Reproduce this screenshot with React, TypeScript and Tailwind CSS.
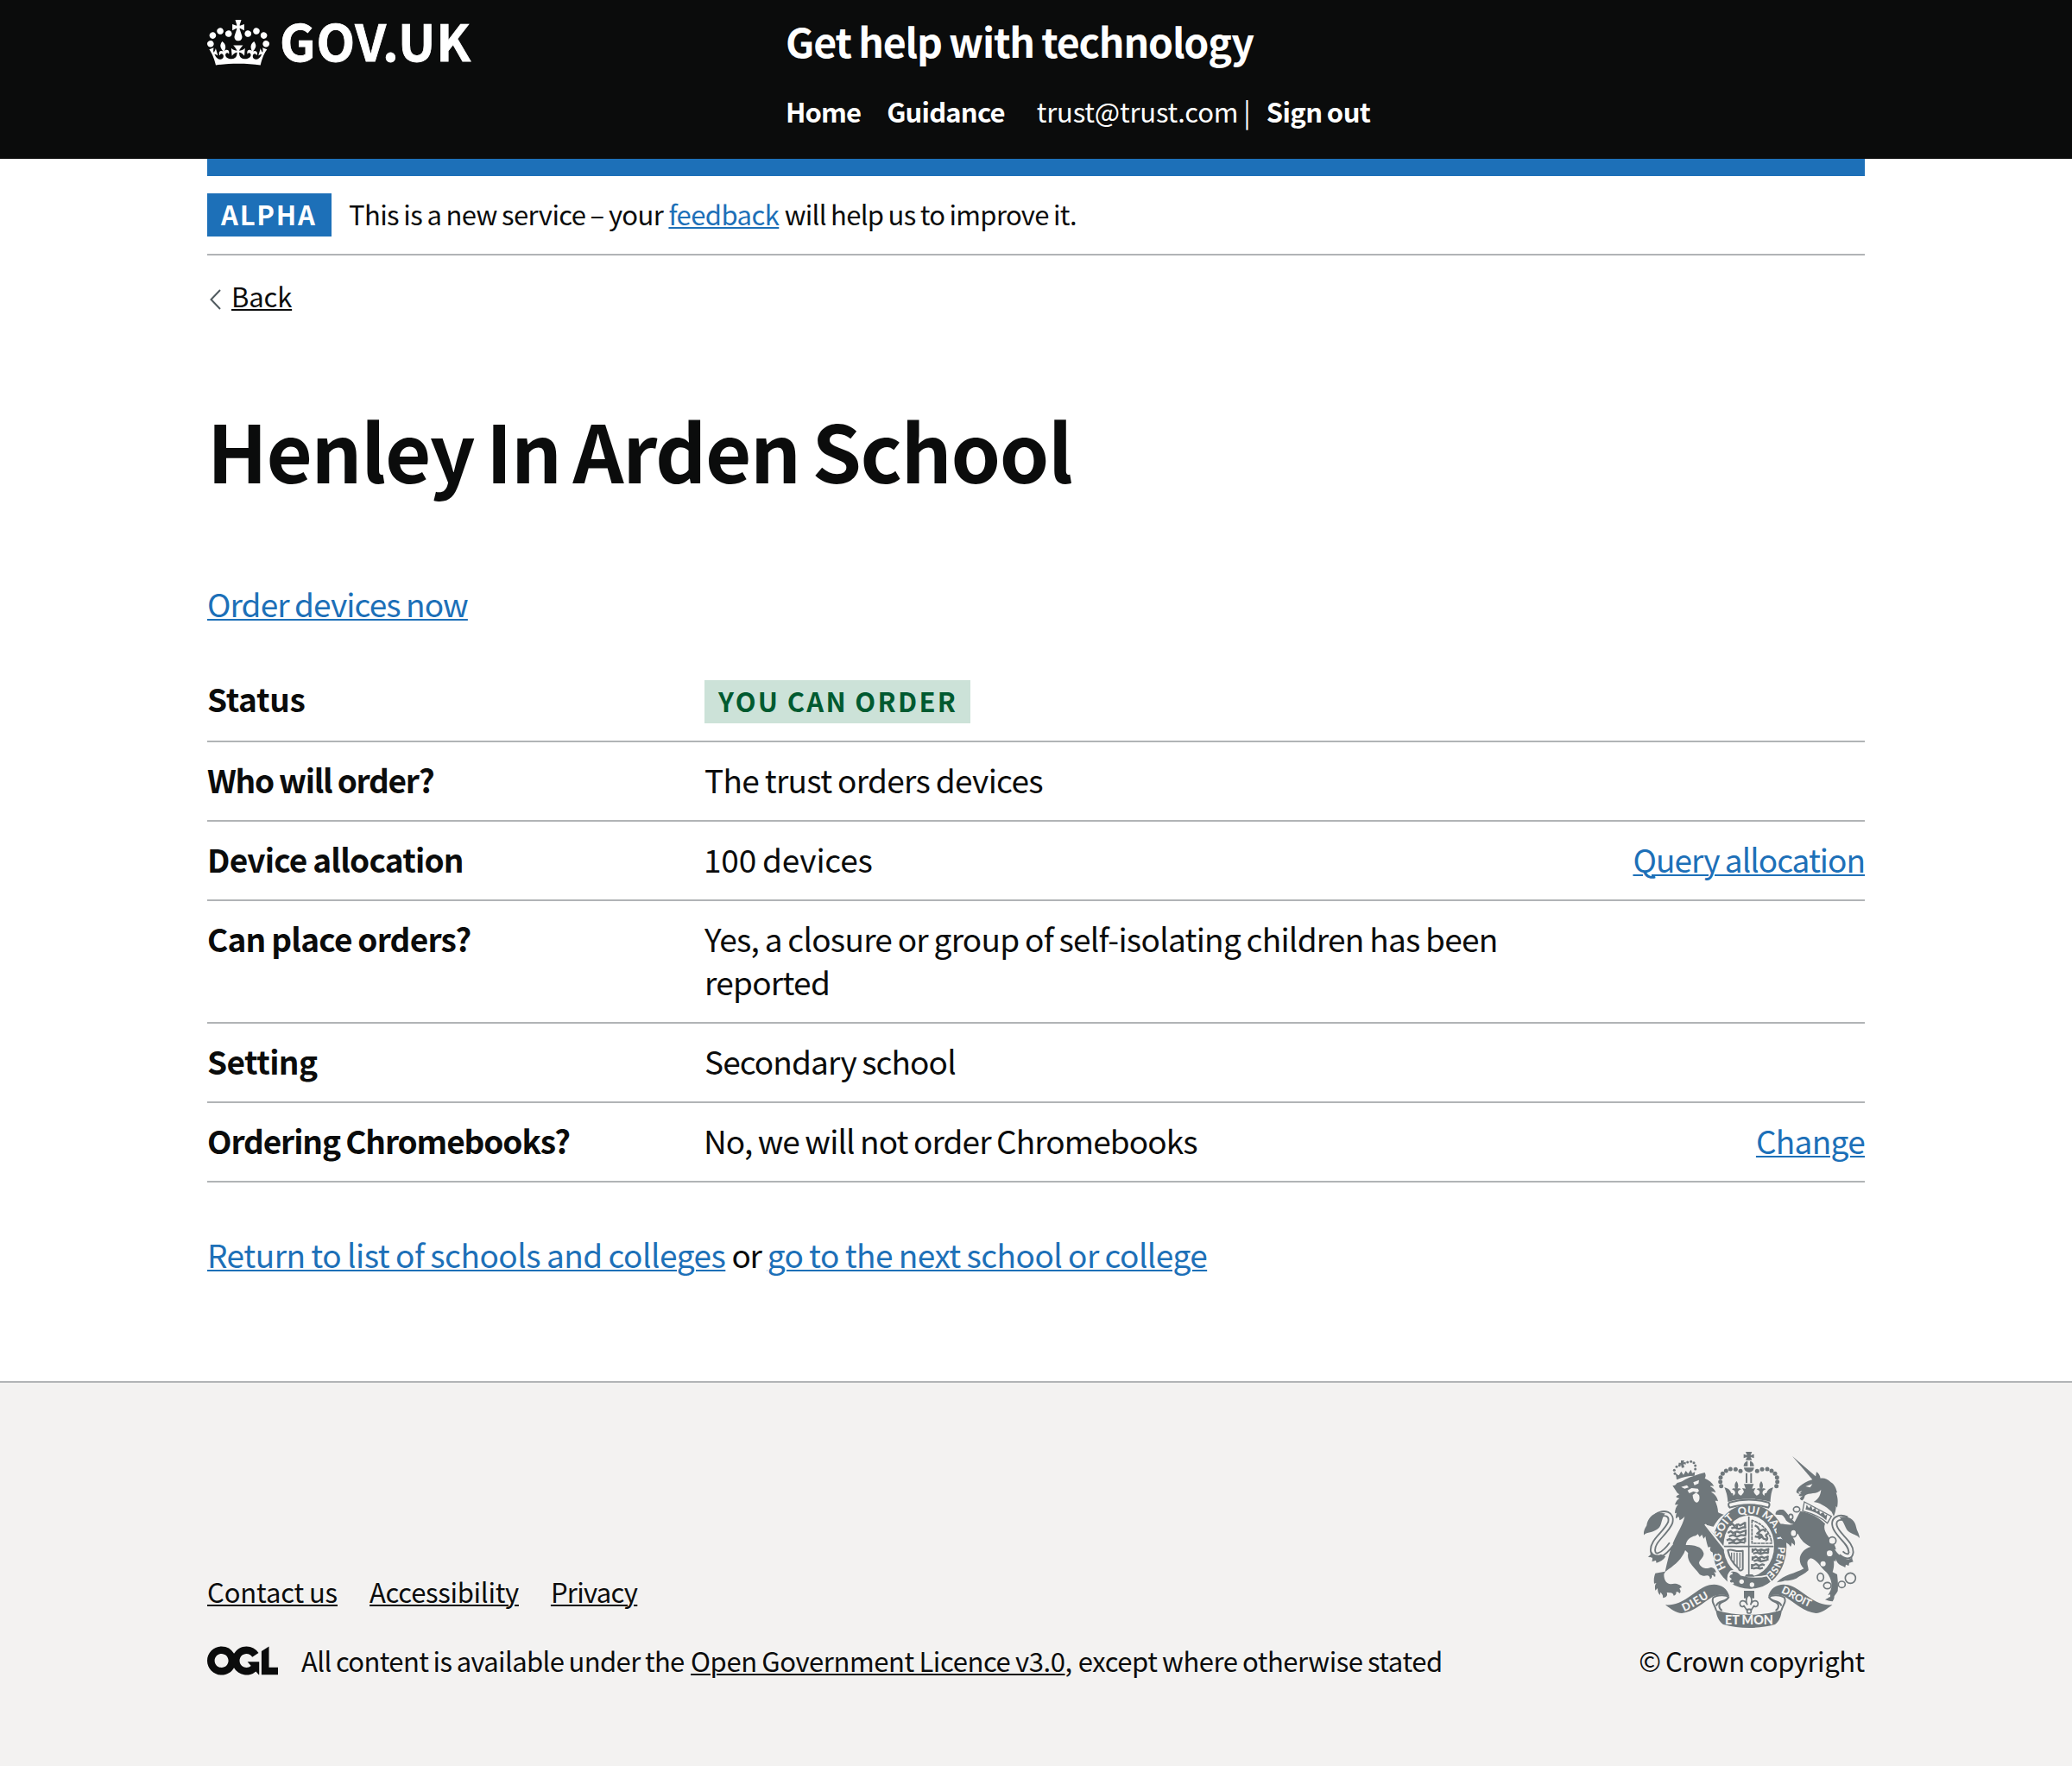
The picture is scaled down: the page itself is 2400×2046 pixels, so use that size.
import React from "react";

const CROWN_BEADS = [[468, 133], [451, 127], [433, 126], [418, 132], [406, 142], [399, 155], [398, 170], [401, 185]];
const LION_CROWN_BEADS = [[238, 130], [246, 118], [256, 113], [240, 142], [284, 102], [296, 100], [306, 104], [311, 114], [311, 126]];

function RoyalArms({ className }: { className: string }) {
  return (
    <svg className={className} viewBox="132 66 750 612" fill="#6f777b" stroke="none" role="img" aria-label="Royal coat of arms">
      {/* imperial crown */}
      <path d="M486 66h22l-5 12 12-4v14l-12-4 5 11h-22l5-11-12 4V74l12 4zM493 98v18h-14c0-10 6-17 14-18zM501 98v18h14c0-10-6-17-14-18zM480 121h35c-1 10-8 16-17 16s-17-6-18-16zM486 140h6v34h-6zM502 140h6v34h-6z" />
      {CROWN_BEADS.map(([x, y]) => (
        <g key={x + "-" + y}>
          <circle cx={x} cy={y} r="7.5" />
          <circle cx={994 - x} cy={y} r="7.5" />
        </g>
      ))}
      <path d="M412 190c12 2 20 8 24 20 4-2 8 2 6 8 8-2 10-12 4-18l-8-4c4-4 8-4 12-2-4-10-2-18 4-26 6 8 8 16 4 26 4-2 8-2 12 2l-8 4c-6 6-2 16 8 18 4-4 8-8 10-14l-6-12 12 2-6-16h34l-6 16 12-2-6 12c2 6 6 10 10 14 10-2 14-12 8-18l-8-4c4-4 8-4 12-2-4-10-2-18 4-26 6 8 8 16 4 26 4-2 8-2 12 2l-8 4c-6 6-4 16 4 18-2-6 2-10 6-8 4-12 12-18 24-20-6 14-9 28-10 50-46-14-104-14-148 0-1-22-6-36-12-50z" />
      <path d="M430 242c42-12 92-12 135 0 6 4 4 12 0 18-40-14-94-14-134 0-6-6-6-14-1-18z" fill="none" stroke="#6f777b" strokeWidth="6" />

      {/* garter and shield */}
      <ellipse cx="499" cy="397" rx="129" ry="148" />
      <ellipse cx="497" cy="393" rx="88" ry="106" fill="#f3f2f1" />
      <path d="M411 395h172M497 291v206" stroke="#6f777b" strokeWidth="5" />
      <g fill="none" stroke="#6f777b" strokeWidth="7" strokeLinejoin="round">
        <path d="M430 322l10-6 6 8 14-6 8 4 16-10M436 332l12-3 14 5 16-6 10 2M424 348l10-6 8 6 14-5 10 4 20-8M428 360l14-5 14 6 14-6 18 2M420 374l10-5 12 6 14-6 10 5 20-7M426 384l14-3 14 3 16-4 14 2M484 310v18M486 336v18M484 364v16M456 316v20M450 344v16M446 370v14" />
        <path d="M510 410l10-6 8 6 12-5 10 4 18-6M512 420l14-4 12 5 14-5 14 2M510 436l12-6 8 6 12-5 8 4 16-6M514 446l12-4 12 5 22-5M510 462l12-6 10 6 12-5 8 3M512 472l12-3 12 3 10-3M510 402v14M510 430v14M508 456v18M538 406v14M536 432v14M532 458v14M564 404v14M562 430v14" />
        <path d="M508 304v80h68c-2-34-26-66-68-80z" strokeWidth="5" strokeDasharray="12 2" />
        <path d="M518 322l10 6 8 14-10 8 14 4 8 14 14 4M536 340l12-4 8 8M540 354l-14 8-8-2M530 368l12-6M554 374c10-2 8-10 4-14s2-10 8-8" />
        <path d="M424 408c18-6 24 8 52 2v64c-6 8-14 4-14-2-14-12-32-32-38-64z" strokeWidth="6" />
        <path d="M437 416v22M446 416v36M456 416v48M466 416v54" strokeWidth="4" />
      </g>
      <path id="garter" d="M497 513A100 116 0 0 1 397 397A100 116 0 0 1 497 281A100 116 0 0 1 599 397A100 116 0 0 1 497 513" fill="none" />
      <g fill="#f3f2f1" fontFamily="Lato, sans-serif" fontWeight="900" fontSize="37" textAnchor="middle">
        <text><textPath href="#garter" startOffset="18%">HO</textPath></text>
        <text><textPath href="#garter" startOffset="35.5%">SOIT</textPath></text>
        <text><textPath href="#garter" startOffset="49.5%">QUI</textPath></text>
        <text><textPath href="#garter" startOffset="62%">MAL</textPath></text>
        <text><textPath href="#garter" startOffset="70.5%">Y</textPath></text>
        <text fontSize="34"><textPath href="#garter" startOffset="82.5%">PENSE</textPath></text>
      </g>
      <path d="M436 480c14-2 26 4 34 14 34 10 70 8 90 2l16 22c-40 34-100 34-142 8-14-8-12-34 2-46z" stroke="#f3f2f1" strokeWidth="5" />
      <path d="M440 488c-14 2-18 14-8 20-10 8 0 20 12 14" fill="none" stroke="#f3f2f1" strokeWidth="7" />
      <path d="M488 492h22l8 8-36 0z" />
      <g fill="#f3f2f1">
        <circle cx="472" cy="517" r="8" />
        <circle cx="508" cy="528" r="8" />
      </g>
      <path d="M480 549h36v26h-10l-8-14-9 14h-9z" />
      <path d="M498 562c14 14 10 26 5 36 6-18 26-18 26-4 0 10-12 14-14 6-2 8-8 10-8 14h-19c0-4-6-6-8-14-2 8-14 4-14-6 0-14 20-14 26 4-5-10-9-22 6-36z" fill="#f3f2f1" stroke="#6f777b" strokeWidth="5" />
      <circle cx="498" cy="620" r="7" fill="#f3f2f1" stroke="#6f777b" strokeWidth="5" />

      {/* motto ribbon */}
      <path d="M382 616c70 22 160 22 230 0-4 24-8 38-24 50-58 16-122 16-180 0-16-12-22-26-26-50z" />
      <g id="ribbonEnd">
        <path d="M207 598c60 4 96-44 138-64 36-16 76-4 85 36-12-10-34-10-56-2-36 22-70 56-110 59-20 0-40-16-57-29z" />
        <path d="M428 570c-12 22-34 14-34 32 0 8 4 12 10 16M374 570c-8 20 2 22 10 48M374 572c10-8 46-12 52 0-8 18-38 8-42 30" fill="none" stroke="#6f777b" strokeWidth="6" />
      </g>
      <use href="#ribbonEnd" transform="matrix(-1 0 0 1 994 0)" />
      <path id="dieu" d="M272 621C306 608 340 582 388 558" fill="none" />
      <path id="droit" d="M608 555C650 572 690 610 750 617" fill="none" />
      <g fill="#f3f2f1" fontFamily="Lato, sans-serif" fontWeight="900">
        <text fontSize="38" letterSpacing="3"><textPath href="#dieu">DIEU</textPath></text>
        <text fontSize="36" letterSpacing="0"><textPath href="#droit">DROIT</textPath></text>
        <text x="498" y="667" fontSize="43" textAnchor="middle">ET MON</text>
      </g>

      {/* lion */}
      <path d="M232 184c8 0 12-4 16-10 12-2 20-6 28-12 20-10 46-18 68-24 4 8 4 14 0 20 14 6 26 14 32 28-6-2-10-2-14 0 10 4 18 12 20 22-6-4-10-4-16-2 12 6 22 18 24 32-4-2-6-2-10-2 6 14 10 26 10 40 6 4 12 6 20 8-14 8-26 24-36 42-10-2-20-4-28-8l56 64c6 12 8 20 8 28-2 10-8 14-14 14l-4-10-4 8-8-2-2-12-6 8c-6-2-8-4-10-10l2-10-8 2c-6-14-8-30-10-38l-6 8-6-14-8 8-6-10-8 6c-20 4-32 16-34 32 28 0 56 4 62 28 2 16-14 22-16 34 4 16 26 24 40 16 12 0 18 8 20 18-4-2-6-2-8 0 6 4 6 12 2 16-2-6-6-8-10-8 2 8 0 12-6 14 0-8-4-12-10-12-8 2-18 2-26-4-10-14-24-26-34-42-6-12-8-20-6-32l-10-10c-10 28-34 50-58 66-8 6-14 10-16 18 0 20 8 32 24 34 16-4 34 0 38 12-6 0-6 2-8 4 6 6 4 14 0 16-4-6-8-6-12-4 2 6-2 10-8 12-2-8-6-10-12-10-4 0-8-2-12 0 4 10-2 16-14 18 2-8-2-14-8-20l-2 10c-6-6-8-14-8-24l-8 8c-2-10-2-20 4-26l-8 2c-2-16 0-24 4-36l34-6c10-40 14-66 28-100 14-34 34-62 40-92-6 8-10 10-18 14 0-8-2-10-4-14-4 6-6 6-8 8-2-8 0-14 2-20l-6 2c0-12 4-24 12-32-6 2-10 2-12 2 4-12 8-18 16-22-6-2-10-2-12-6 4-4 8-6 12-8-8-4-10-8-12-12z" />
      <path d="M345 318l68 86" stroke="#f3f2f1" strokeWidth="6" />
      <path d="M262 188l20-6 6 8-14 4zM304 172l20-8-2 12-14 6zM284 200l14-8 22 2 4 8-6 6-14-4-14 6zM302 216l12-8 10 8c4 12 0 26-8 26s-14-14-14-26z" fill="#f3f2f1" />
      <path d="M246 160c20-10 40-14 62-14" stroke="#6f777b" strokeWidth="6" fill="none" />
      <path d="M246 158l-4-16 12 6 8-14 8 12 8-14 8 10 10-14 4 12 10-4-2 12c-22 0-44 4-62 10z" />
      {LION_CROWN_BEADS.map(([x, y]) => (
        <circle key={x + "." + y} cx={x} cy={y} r="4.5" />
      ))}
      <path d="M261 96l12 0-3 7 8-2 0 9-8-2 3 12-9 2-3-12-7 3-1-9 8 0z" />
      <g fill="none">
        <path id="lionTail" d="M176 290c28-18 56-8 48 22-14 36-66 64-60 100 4 26 34 16 64-26" stroke="#6f777b" strokeWidth="21" />
        <path d="M176 290c28-18 56-8 48 22-14 36-66 64-60 100 4 26 34 16 66-28" stroke="#f3f2f1" strokeWidth="10" />
      </g>
      <path d="M206 280c-6 0-12-2-16-2-28-2-46 22-48 44-4 8-10 14-12 36 8-10 14-10 24-12 16-4 34-12 38-30 4-14 6-24 14-36zM158 410c0 12-4 16-12 20 8 4 10 4 16 4 0 6 0 8-2 14 8-2 10-4 14-4 2 4 0 6 2 8 14-4 24-10 32-22l-16-8c-14 6-28 2-34-12z" />

      {/* unicorn */}
      <path d="M648 81l86 74-12 12z" />
      <path d="M662 206c2-20 34-38 64-46 4-6 4-14 6-24 8 4 12 12 14 22 12-2 26 2 36 14 14 8 18 22 22 36l-4 0c6 16 8 30 4 52l-4-6c0 14-4 26-8 36-4-8-6-14-8-16-20-20-44-32-62-34 12-6 24-18 26-42-14 18-42 8-56 20-2 8-4 12-8 16-4 2-8-2-10-6l10-10c-8 4-12 2-14-2l10-6c-8 2-14 2-18-4z" />
      <path d="M694 186l24-8-8 12zM668 206l14-4-8 8z" fill="#f3f2f1" />
      <path d="M690 240l94 50-14 24c-26-24-54-34-86-42z" fill="#f3f2f1" stroke="#6f777b" strokeWidth="4" />
      <path d="M694 266l4-16 8 12 8-10 4 16 10-8 4 14 10-6 2 14 12-6 6 12 8-6-4 22c-22-22-44-32-72-38z" />
      <path d="M676 272c34 6 62 20 86 44-8 18 4 38 20 56 10 10 16 22 18 34-6-2-8-2-8-2 8 16 10 30 6 44l-6-4c2 16 0 28-4 40l16 8c2 20 4 36 2 58-4 8-8 12-12 18 0 8-2 12-6 18-10 0-20-4-26-6 8-4 12-8 18-10l0-8-8 2c10-14 14-26 12-42-2-14-8-26-16-36-26-22-34-46-56-50-22 10-6 30-8 42-12 12-28 18-42 28-14 6-26 8-40 8-8 4-18 4-28 6 12-14 28-22 44-28 20-6 34-12 50-20-26-28-14-64 24-76-22-10-34-24-44-44-10-6-18-6-28-6l10 18c6 10 10 16 6 28-4-6-8-8-10-10 0 8-2 12-4 14-6-12-16-14-22-18-8-10-14-20-26-30 0-8-2-16 0-30 20-4 38 4 58 0z" />
      <path d="M664 318c-18 2-30-6-38-14-4-8-8-14-14-18l-22-2c-2-12 10-20 28-16 10 8 18 22 28 32z" />
      <g fill="none" stroke="#6f777b" strokeWidth="5">
        <ellipse cx="663" cy="266" rx="11" ry="9" />
        <ellipse cx="643" cy="292" rx="7" ry="9" fill="#f3f2f1" />
        <ellipse cx="652" cy="349" rx="11" ry="13" fill="#f3f2f1" />
        <circle cx="787" cy="375" r="13" fill="#f3f2f1" />
        <circle cx="778" cy="419" r="10" fill="#f3f2f1" stroke="none" />
        <circle cx="755" cy="455" r="9" fill="#f3f2f1" stroke="none" />
        <ellipse cx="746" cy="502" rx="11" ry="14" />
        <ellipse cx="770" cy="531" rx="13" ry="11" />
        <ellipse cx="820" cy="527" rx="12" ry="11" />
        <circle cx="850" cy="505" r="18" />
      </g>
      <g fill="none">
        <path d="M838 300c-28-12-50 0-42 26 8 30 58 56 56 90-2 18-20 16-34 2" stroke="#6f777b" strokeWidth="21" />
        <path d="M838 300c-28-12-50 0-42 26 8 30 58 56 56 90-2 18-20 16-38-2" stroke="#f3f2f1" strokeWidth="10" />
      </g>
      <path d="M812 294c34-8 54 10 58 34 2 12 10 20 12 38-12-16-38-12-48-36-6-14-10-24-22-36zM790 396c10 18 22 32 40 40 8 6 18 6 26-4 0 8 2 12 4 16l-14 4-2 10-10-4-2 10c-8-6-20-8-26-16-10-14-16-36-16-56z" />
    </svg>
  );
}

function CrownLogo() {
  return (
    <svg className="h-[53px] w-[72px]" viewBox="0 0 132 97" fill="currentColor" aria-hidden="true">
      <path d="M25 30.2c3.5 1.5 7.7-.2 9.1-3.7 1.5-3.6-.2-7.8-3.9-9.2-3.6-1.4-7.6.3-9.1 3.9-1.4 3.5.3 7.5 3.9 9zM9 39.5c3.6 1.5 7.8-.2 9.2-3.7 1.5-3.6-.2-7.8-3.9-9.1-3.6-1.5-7.6.2-9.1 3.8-1.4 3.5.3 7.5 3.8 9zM4.4 57.2c3.5 1.5 7.7-.2 9.1-3.8 1.5-3.6-.2-7.7-3.9-9.1-3.5-1.5-7.6.3-9.1 3.8-1.4 3.5.3 7.6 3.9 9.1zm38.3-21.4c3.5 1.5 7.7-.2 9.1-3.8 1.5-3.6-.2-7.7-3.9-9.1-3.6-1.5-7.6.3-9.1 3.8-1.3 3.6.4 7.7 3.9 9.1zm64.4-5.6c-3.6 1.5-7.8-.2-9.1-3.7-1.5-3.6.2-7.8 3.8-9.2 3.6-1.4 7.7.3 9.2 3.9 1.3 3.5-.4 7.5-3.9 9zm15.9 9.3c-3.6 1.5-7.7-.2-9.1-3.7-1.5-3.6.2-7.8 3.7-9.1 3.6-1.5 7.7.2 9.2 3.8 1.5 3.5-.3 7.5-3.8 9zm4.7 17.7c-3.6 1.5-7.8-.2-9.2-3.8-1.5-3.6.2-7.7 3.9-9.1 3.6-1.5 7.7.3 9.2 3.8 1.3 3.5-.4 7.6-3.9 9.1zM89.3 35.8c-3.6 1.5-7.8-.2-9.2-3.8-1.4-3.6.2-7.7 3.9-9.1 3.6-1.5 7.7.3 9.2 3.8 1.4 3.6-.3 7.7-3.9 9.1zM69.7 17.7l8.9 4.7V9.3l-8.9 2.8c-.2-.3-.5-.6-.9-.9L72.4 0H59.6l3.5 11.2c-.3.3-.6.5-.9.9l-8.8-2.8v13.1l8.8-4.7c.3.3.6.7.9.9l-5 15.4v.1c-.2.8-.4 1.6-.4 2.4 0 4.1 3.1 7.5 7 8.1h.2c.3 0 .7.1 1 .1.4 0 .7 0 1-.1h.2c4-.6 7.1-4.1 7.1-8.1 0-.8-.1-1.7-.4-2.4V34l-5.1-15.4c.4-.2.7-.6 1-.9zM66 92.8c16.9 0 32.8 1.1 47.1 3.2 4-16.9 8.9-26.7 14-33.5l-9.6-3.4c1 4.9 1.1 7.2 0 10.2-1.5-1.4-3-4.3-4.2-8.7L108.6 76c2.8-2 5-3.2 7.5-3.3-4.4 9.4-10 11.9-13.6 11.2-4.3-.8-6.3-4.6-5.6-7.9 1-4.7 5.7-5.9 8-.5 4.3-8.7-3-11.4-7.6-8.8 7.1-7.2 7.9-13.5 2.1-21.1-8 6.1-8.1 12.3-4.5 20.8-4.7-5.4-12.1-2.5-9.5 6.2 3.4-5.2 7.9-2 7.2 3.1-.6 4.3-6.4 7.8-13.5 7.2-10.3-.9-10.9-8-11.2-13.8 2.5-.5 7.1 1.8 11 7.3L80.2 60c-4.1 4.4-8 5.3-12.3 5.4 1.4-4.4 8-11.6 8-11.6H55.5s6.4 7.2 7.9 11.6c-4.2-.1-8-1-12.3-5.4l1.4 16.4c3.9-5.5 8.5-7.7 10.9-7.3-.3 5.8-.9 12.8-11.1 13.8-7.2.6-12.9-2.9-13.5-7.2-.7-5 3.8-8.3 7.1-3.1 2.7-8.7-4.6-11.6-9.4-6.2 3.7-8.5 3.6-14.7-4.6-20.8-5.8 7.6-5 13.9 2.2 21.1-4.7-2.6-11.9.1-7.7 8.8 2.3-5.5 7.1-4.2 8.1.5.7 3.3-1.3 7.1-5.7 7.9-3.5.7-9-1.8-13.5-11.2 2.5.1 4.7 1.3 7.5 3.3l-4.7-15.4c-1.2 4.4-2.7 7.2-4.3 8.7-1.1-3-.9-5.3 0-10.2l-9.5 3.4c5 6.9 9.9 16.7 14 33.5 14.8-2.1 30.8-3.2 47.7-3.2z" />
    </svg>
  );
}

function OglLogo() {
  return (
    <svg className="mt-[3px] h-[34px] w-[82px]" viewBox="0 0 483.2 195.7" fill="currentColor" aria-hidden="true">
      <path d="M421.5 142.8V.1l-50.7 32.3v161.1h112.4v-50.7zm-122.3-9.6A47.12 47.12 0 0 1 221 97.8c0-26 21.1-47.1 47.1-47.1 16.7 0 31.4 8.7 39.7 21.8l42.7-27.2A97.63 97.63 0 0 0 268.1 0c-36.5 0-68.3 20.1-85.1 49.7A98 98 0 0 0 97.8 0C43.9 0 0 43.9 0 97.8s43.9 97.8 97.8 97.8c36.5 0 68.3-20.1 85.1-49.7a97.76 97.76 0 0 0 149.6 25.4l19.4 22.2h3v-87.8h-80l24.3 27.5zM97.8 145c-26 0-47.1-21.1-47.1-47.1s21.1-47.1 47.1-47.1 47.1 21.1 47.1 47.1S123.8 145 97.8 145" />
    </svg>
  );
}

const underline = "underline decoration-2 underline-offset-[2px]";

function Link({ className = "", children }: { className?: string; children: React.ReactNode }) {
  return (
    <a href="#" className={`${underline} text-[#1d70b8] ${className}`}>
      {children}
    </a>
  );
}

type Row = {
  label: string;
  labelClass: string;
  value: string;
  valueClass: string;
  action?: string;
  actionClass?: string;
};

const ROWS: Row[] = [
  { label: "Who will order?", labelClass: "tracking-[-1.26px]", value: "The trust orders devices", valueClass: "tracking-[-0.69px]" },
  { label: "Device allocation", labelClass: "tracking-[-0.77px]", value: "100 devices", valueClass: "tracking-[-0.2px] -indent-[1px]", action: "Query allocation", actionClass: "tracking-[-1px]" },
  { label: "Can place orders?", labelClass: "tracking-[-0.76px]", value: "Yes, a closure or group of self-isolating children has been reported", valueClass: "tracking-[-0.74px]" },
  { label: "Setting", labelClass: "tracking-[-0.57px]", value: "Secondary school", valueClass: "tracking-[-0.91px]" },
  { label: "Ordering Chromebooks?", labelClass: "tracking-[-1.1px]", value: "No, we will not order Chromebooks", valueClass: "tracking-[-0.9px] -indent-[1px]", action: "Change", actionClass: "tracking-[-0.7px]" },
];

export default function App() {
  return (
    <div className="flex min-h-[2046px] flex-col bg-white font-['Noto_Sans_CJK_JP','Noto_Sans',sans-serif] text-[37px] leading-[50px] text-[#0b0c0c] [word-spacing:-1px]">
      <header className="h-[184px] bg-[#0b0c0c] text-white">
        <div className="mx-auto flex h-full w-[1920px]">
          <div className="flex w-[670px] items-start pt-[23px]">
            <CrownLogo />
            <span className="-mt-[7px] ml-3 text-[58px] leading-[60px] font-bold tracking-[0.8px] [-webkit-text-stroke:0.75px_white]">GOV.UK</span>
          </div>
          <div className="pt-[17px]">
            <div className="text-[46.5px] leading-[60px] font-bold tracking-[-1.2px]">Get help with technology</div>
            <nav className="mt-8 flex text-[31px] leading-[40px] font-bold">
              <a href="#" className="tracking-[-0.9px]">Home</a>
              <a href="#" className="ml-[30px] tracking-[-0.8px]">Guidance</a>
              <span className="ml-[37px] font-normal tracking-[-0.19px]">trust@trust.com</span>
              <span className="ml-1.5 font-normal">|</span>
              <a href="#" className="ml-[18px] tracking-[-0.6px]">Sign out</a>
            </nav>
          </div>
        </div>
      </header>

      <div className="mx-auto w-[1920px]">
        <div className="h-5 bg-[#1d70b8]" />
        <div className="flex h-[92px] items-start border-b-2 border-[#b1b4b6] pt-5 text-[31px] leading-[47px]">
          <strong className="h-[50px] w-[144px] bg-[#1d70b8] pl-4 font-bold tracking-[1.77px] text-white">ALPHA</strong>
          <p className="ml-5 tracking-[-0.62px]">
            This is a new service – your <Link className="ml-[1px] tracking-[-0.56px]">feedback</Link>{" "}
            <span className="ml-[1px] tracking-[-0.7px]">will help us to improve it.</span>
          </p>
        </div>

        <a href="#" className="mt-[27px] flex h-10 items-center text-[31px] leading-[40px]">
          <svg className="mt-[7px] ml-[3px] h-6 w-[13px]" viewBox="0 0 13 24" fill="none" stroke="#505a5f" strokeWidth="2" aria-hidden="true">
            <path d="M12 1L1.5 12 12 23" />
          </svg>
          <span className={`${underline} ml-3 tracking-[-0.15px]`}>Back</span>
        </a>

        <main>
          <h1 className="mt-[107px] text-[92px] leading-[100px] font-bold tracking-[-1.26px] [word-spacing:-6px]">Henley In Arden School</h1>
          <p className="mt-[104px]">
            <Link className="tracking-[-0.9px]">Order devices now</Link>
          </p>

          <dl className="mt-[59px]">
            <div className="flex h-[77px] border-b-2 border-[#b1b4b6]">
              <dt className="w-[576px] pt-[1px] font-bold tracking-[-0.3px]">Status</dt>
              <dd className="pt-[5px]">
                <strong className="block h-[50px] w-[308px] bg-[#cce2d8] pl-4 text-[31px] leading-[47px] font-bold tracking-[2.3px] text-[#005a30]">
                  YOU CAN ORDER
                </strong>
              </dd>
            </div>
            {ROWS.map((row) => (
              <div key={row.label} className="flex border-b-2 border-[#b1b4b6] pt-[18px] pb-[22px]">
                <dt className={`w-[576px] font-bold ${row.labelClass}`}>{row.label}</dt>
                <dd className={`w-[960px] ${row.valueClass}`}>{row.value}</dd>
                {row.action && (
                  <dd className="ml-auto">
                    <Link className={row.actionClass}>{row.action}</Link>
                  </dd>
                )}
              </div>
            ))}
          </dl>

          <p className="mt-[58px]">
            <Link className="tracking-[-0.49px]">Return to list of schools and colleges</Link>{" "}
            <span className="tracking-[-1.5px]">or</span>{" "}
            <Link className="tracking-[-0.53px]">go to the next school or college</Link>
          </p>
        </main>
      </div>

      <footer className="mt-[122px] grow border-t-2 border-[#b1b4b6] bg-[#f3f2f1] text-[31px] leading-[40px]">
        <div className="mx-auto flex w-[1920px] justify-between">
          <div className="pt-[222px]">
            <div className="flex">
              <a href="#" className={`${underline} tracking-[-0.13px]`}>Contact us</a>
              <a href="#" className={`${underline} ml-[37px] tracking-[-0.28px]`}>Accessibility</a>
              <a href="#" className={`${underline} ml-[37px] tracking-[-0.7px]`}>Privacy</a>
            </div>
            <div className="mt-10 flex items-start">
              <OglLogo />
              <p className="ml-[27px] tracking-[-0.63px]">
                All content is available under the{" "}
                <a href="#" className={`${underline} ml-[2px] tracking-[-0.4px]`}>Open Government Licence v3.0</a>,{" "}
                <span className="ml-[2px] tracking-[-0.45px]">except where otherwise stated</span>
              </p>
            </div>
          </div>
          <div className="flex w-[262px] flex-col items-center pt-20">
            <RoyalArms className="h-[204px] w-[250px]" />
            <p className="mt-[18px] tracking-[-0.45px] whitespace-nowrap">© Crown copyright</p>
          </div>
        </div>
      </footer>
    </div>
  );
}
